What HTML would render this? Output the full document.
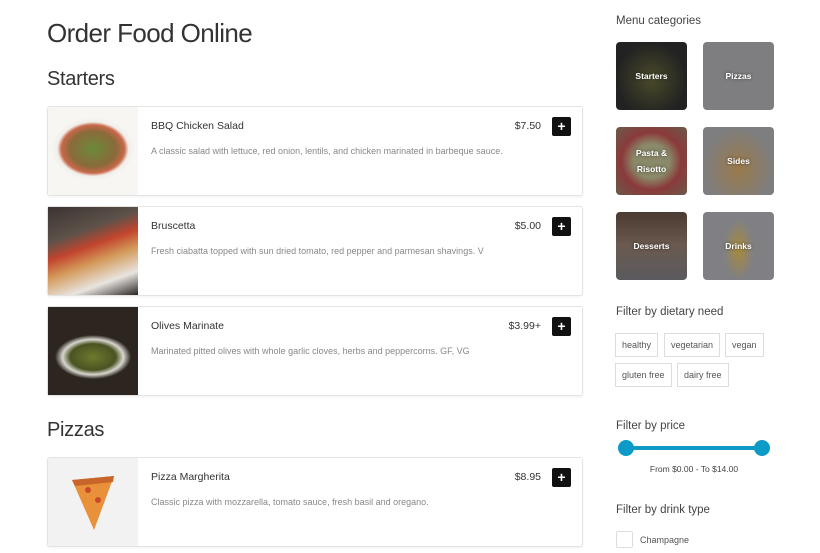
<!DOCTYPE html>
<html><head><meta charset="utf-8"><style>
*{box-sizing:border-box;margin:0;padding:0}
body{width:820px;height:553px;overflow:hidden;background:#fff;font-family:"Liberation Sans",sans-serif;color:#333;position:relative}
.abs{position:absolute}
h1{position:absolute;left:47px;top:18px;font-size:26px;font-weight:300;color:#333;letter-spacing:-0.6px}
h2{position:absolute;left:47px;font-size:20px;font-weight:300;color:#333;letter-spacing:-0.3px}
.card{position:absolute;left:47px;width:536px;height:90px;border:1px solid #e4e4e4;border-radius:3px;box-shadow:0 1px 2px rgba(0,0,0,.06);background:#fff}
.card .img{position:absolute;left:0;top:0;width:90px;height:88px;overflow:hidden}
.card .name{position:absolute;left:103px;top:13px;font-size:10.5px;color:#333}
.card .desc{position:absolute;left:103px;top:39px;font-size:9px;color:#888}
.card .price{position:absolute;right:41px;top:13px;font-size:10.5px;color:#333}
.card .btn{position:absolute;right:11px;top:10px;width:19px;height:19px;background:#111;border-radius:2px;color:#fff;font-weight:bold;font-size:14px;line-height:19px;text-align:center}
.side{position:absolute;left:616px;font-size:11.5px;color:#444}
.tile{position:absolute;width:71px;height:68px;border-radius:4px;overflow:hidden;color:#fff;font-weight:bold;font-size:8.5px;display:flex;align-items:center;justify-content:center;text-align:center;line-height:16px;text-shadow:0 0 3px rgba(0,0,0,.6)}
.tag{position:absolute;height:24px;border:1px solid #ddd;font-size:9px;color:#555;line-height:22px;padding:0 6px}
</style></head><body>
<h1>Order Food Online</h1>
<h2 style="top:68px">Starters</h2>
<div class="card" style="top:106px"><div class="img" style="background:radial-gradient(ellipse 42px 32px at 45px 42px,#6b8a3a 0,#8a6a3a 55%,#c8684a 75%,#f1efe9 85%,#f7f6f3 100%)"></div><div class="name">BBQ Chicken Salad</div><div class="desc">A classic salad with lettuce, red onion, lentils, and chicken marinated in barbeque sauce.</div><div class="price">$7.50</div><div class="btn">+</div></div>
<div class="card" style="top:206px"><div class="img" style="background:linear-gradient(160deg,#3a3330 0,#5d524a 30%,#c2452e 45%,#d39a5a 60%,#e8e4e0 80%,#2a2522 100%)"></div><div class="name">Bruscetta</div><div class="desc">Fresh ciabatta topped with sun dried tomato, red pepper and parmesan shavings. V</div><div class="price">$5.00</div><div class="btn">+</div></div>
<div class="card" style="top:306px"><div class="img" style="background:radial-gradient(ellipse 38px 22px at 45px 50px,#6e7a30 0,#4a5322 60%,#d8d6cf 80%,#2d2620 100%)"></div><div class="name">Olives Marinate</div><div class="desc">Marinated pitted olives with whole garlic cloves, herbs and peppercorns. GF, VG</div><div class="price">$3.99+</div><div class="btn">+</div></div>
<h2 style="top:419px">Pizzas</h2>
<div class="card" style="top:457px"><div class="img" style="background:#f2f2f2"><svg width="90" height="88"><polygon points="24,22 66,18 46,72" fill="#e8913a"/><polygon points="24,22 66,18 65,24 27,28" fill="#c8652a"/><circle cx="40" cy="32" r="3" fill="#c94a2a"/><circle cx="50" cy="42" r="3" fill="#c94a2a"/></svg></div><div class="name">Pizza Margherita</div><div class="desc">Classic pizza with mozzarella, tomato sauce, fresh basil and oregano.</div><div class="price">$8.95</div><div class="btn">+</div></div>

<div class="side" style="top:15px">Menu categories</div>
<div class="tile" style="left:616px;top:42px;background:radial-gradient(ellipse at 50% 55%,#4a4a2a,#222 70%)">Starters</div>
<div class="tile" style="left:703px;top:42px;background:#7e7e80">Pizzas</div>
<div class="tile" style="left:616px;top:127px;background:radial-gradient(ellipse at 50% 50%,#8a8a6a 35%,#8a3a3a 60%,#6a5a4a)">Pasta &amp;<br>Risotto</div>
<div class="tile" style="left:703px;top:127px;background:radial-gradient(ellipse at 50% 60%,#9a7a4a,#7e7e80 70%)">Sides</div>
<div class="tile" style="left:616px;top:212px;background:linear-gradient(180deg,#4a3a30,#6a5a50 50%,#5a5a5e)">Desserts</div>
<div class="tile" style="left:703px;top:212px;background:radial-gradient(ellipse 15px 30px at 50% 55%,#a88a3a,#808084 100%)">Drinks</div>

<div class="side" style="top:306px">Filter by dietary need</div>
<div class="tag" style="left:615px;top:333px">healthy</div>
<div class="tag" style="left:664px;top:333px">vegetarian</div>
<div class="tag" style="left:725px;top:333px">vegan</div>
<div class="tag" style="left:615px;top:363px">gluten free</div>
<div class="tag" style="left:677px;top:363px">dairy free</div>

<div class="side" style="top:420px">Filter by price</div>
<div class="abs" style="left:626px;top:446px;width:136px;height:4px;background:#0e9ac7"></div>
<div class="abs" style="left:618px;top:440px;width:16px;height:16px;border-radius:50%;background:#0e9ac7"></div>
<div class="abs" style="left:754px;top:440px;width:16px;height:16px;border-radius:50%;background:#0e9ac7"></div>
<div class="abs" style="left:616px;top:464px;width:156px;text-align:center;font-size:8.5px;color:#444">From $0.00 - To $14.00</div>

<div class="side" style="top:504px">Filter by drink type</div>
<div class="abs" style="left:616px;top:531px;width:17px;height:17px;border:1px solid #ddd;border-radius:2px"></div>
<div class="abs" style="left:640px;top:535px;font-size:9px;color:#555">Champagne</div>
</body></html>
